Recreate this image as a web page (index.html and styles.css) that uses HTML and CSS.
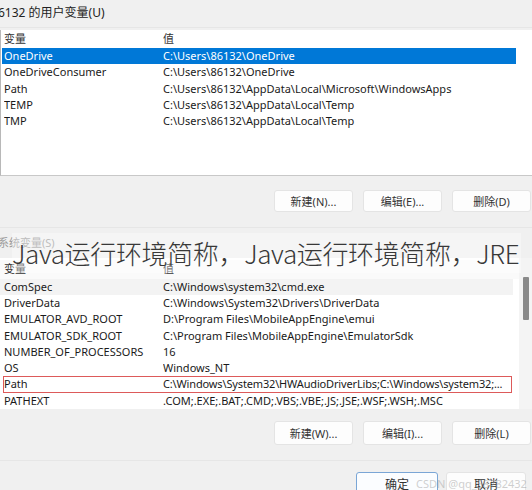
FILE: index.html
```html
<!DOCTYPE html>
<html lang="zh-CN">
<head>
<meta charset="utf-8">
<link rel="stylesheet" href="styles.css">
</head>
<body>
<div class="dialog">
  <div class="group-label">6132 的用户变量(U)</div>
  <div class="list list-user">
    <div class="row head"><span>变量</span><span>值</span></div>
    <div class="row selected"><span>OneDrive</span><span>C:\Users\86132\OneDrive</span></div>
    <div class="row"><span>OneDriveConsumer</span><span>C:\Users\86132\OneDrive</span></div>
    <div class="row"><span>Path</span><span>C:\Users\86132\AppData\Local\Microsoft\WindowsApps</span></div>
    <div class="row"><span>TEMP</span><span>C:\Users\86132\AppData\Local\Temp</span></div>
    <div class="row"><span>TMP</span><span>C:\Users\86132\AppData\Local\Temp</span></div>
  </div>
  <div class="btn-row btn-row-top">
    <div class="btn">新建(N)...</div>
    <div class="btn">编辑(E)...</div>
    <div class="btn">删除(D)</div>
  </div>
  <div class="sep"></div>
  <div class="group-label sys-label">系统变量(S)</div>
  <div class="list-wrap">
    <div class="list list-sys">
      <div class="row head"><span>变量</span><span>值</span></div>
      <div class="row soft"><span>ComSpec</span><span>C:\Windows\system32\cmd.exe</span></div>
      <div class="row"><span>DriverData</span><span>C:\Windows\System32\Drivers\DriverData</span></div>
      <div class="row"><span>EMULATOR_AVD_ROOT</span><span>D:\Program Files\MobileAppEngine\emui</span></div>
      <div class="row"><span>EMULATOR_SDK_ROOT</span><span>C:\Program Files\MobileAppEngine\EmulatorSdk</span></div>
      <div class="row"><span>NUMBER_OF_PROCESSORS</span><span>16</span></div>
      <div class="row"><span>OS</span><span>Windows_NT</span></div>
      <div class="row marked"><span>Path</span><span class="path-val">C:\Windows\System32\HWAudioDriverLibs;C:\Windows\system32;...</span></div>
      <div class="row"><span>PATHEXT</span><span>.COM;.EXE;.BAT;.CMD;.VBS;.VBE;.JS;.JSE;.WSF;.WSH;.MSC</span></div>
    </div>
    <div class="scrollbar"><div class="thumb"></div></div>
  </div>
  <div class="btn-row btn-row-bottom">
    <div class="btn">新建(W)...</div>
    <div class="btn">编辑(I)...</div>
    <div class="btn">删除(L)</div>
  </div>
  <div class="sep"></div>
  <div class="btn-row btn-row-ok">
    <div class="btn default">确定</div>
    <div class="btn">取消</div>
  </div>
</div>
<div class="overlay-title">Java运行环境简称，Java运行环境简称，JRE</div>
<div class="watermark">CSDN @qq_58782432</div>
</body>
</html>
```
FILE: styles.css
```css
html, body {
  margin: 0;
  padding: 0;
}
body {
  width: 532px;
  height: 490px;
  overflow: hidden;
  background: #f0f0f0;
  font-family: "Noto Sans", "Noto Sans CJK SC", sans-serif;
  font-size: 11px;
  color: #1a1a1a;
  position: relative;
}
.dialog {
  display: flex;
  flex-direction: column;
}
.group-label {
  height: 28px;
  line-height: 26px;
  margin-left: -2px;
  font-size: 12px;
  color: #222;
  border-bottom: 1px solid #e6e6e6;
  box-sizing: border-box;
}
.list {
  background: #fff;
  display: flex;
  flex-direction: column;
}
.list-user {
  margin-top: 2px;
  height: 146px;
  box-sizing: border-box;
  border-left: 1px solid #b8b8b8;
  border-bottom: 1px solid #c8c8c8;
  padding-left: 1px;
}
.row {
  display: grid;
  grid-template-columns: 159px 1fr;
  height: 16.3px;
  line-height: 16px;
  padding-left: 2px;
  margin-right: 16px;
  white-space: nowrap;
}
.row span {
  overflow: hidden;
}
.row.head {
  height: 18px;
  line-height: 18px;
  color: #333;
  margin-right: 0;
}
.row.selected {
  background: #0078d7;
  color: #fff;
}
.list-sys .row {
  padding-left: 4px;
  margin-right: 6px;
}
.list-sys .row.soft {
  background: #f3f3f3;
}
.list-sys .row.marked {
  box-shadow: inset 0 0 0 1px #dd5a5a;
  margin-left: 3px;
  padding-left: 1px;
  margin-right: 7px;
  background: #fff;
}
.path-val {
  letter-spacing: -0.15px;
}
.btn-row {
  display: flex;
  justify-content: flex-end;
  gap: 10px;
  padding-right: 1px;
}
.btn-row-top {
  margin-top: 14px;
  height: 22px;
}
.btn-row-bottom {
  margin-top: 12px;
  height: 24px;
}
.btn {
  width: 79px;
  box-sizing: border-box;
  background: #fdfdfd;
  border: 1px solid #e4e4e4;
  border-radius: 3px;
  display: flex;
  align-items: center;
  justify-content: center;
  font-size: 11px;
  color: #333;
}
.sep {
  margin-top: 15px;
  height: 1px;
  background: #e6e6e6;
}
.sys-label {
  height: 30px;
  line-height: 30px;
  font-size: 11px;
  color: #9a9a9a;
  border-bottom: none;
}
.list-wrap {
  display: flex;
  height: 151px;
  background: #fff;
  overflow: hidden;
}
.list-sys {
  flex: 1;
  padding-top: 2px;
}
.list-sys .row.head {
  height: 19px;
  background: #fafafa;
  margin-right: 0;
}
.scrollbar {
  width: 13px;
  background: #f4f4f4;
  display: flex;
  justify-content: center;
  padding-top: 19px;
}
.thumb {
  width: 6px;
  height: 43px;
  background: #8a8a8a;
  border-radius: 1px;
}
.btn-row-ok {
  margin-top: 11px;
  height: 24px;
  padding-right: 6px;
  gap: 8px;
}
.btn-row-ok .btn {
  width: 80px;
  font-size: 12px;
}
.btn-row-ok .btn.default {
  width: 82px;
  border: 1px solid #7aa6d6;
  background: #fbfdff;
}
.overlay-title {
  position: absolute;
  left: 12px;
  top: 233px;
  height: 40px;
  line-height: 40px;
  font-family: "Noto Sans CJK SC", "Noto Sans", sans-serif;
  font-weight: 300;
  font-size: 26px;
  letter-spacing: -0.35px;
  color: #383838;
  white-space: nowrap;
  background: rgba(255,255,255,0.35);
  padding-right: 2px;
}
.watermark {
  position: absolute;
  left: 416px;
  top: 476px;
  font-size: 11px;
  color: rgba(160,160,160,0.5);
  white-space: nowrap;
}
```
